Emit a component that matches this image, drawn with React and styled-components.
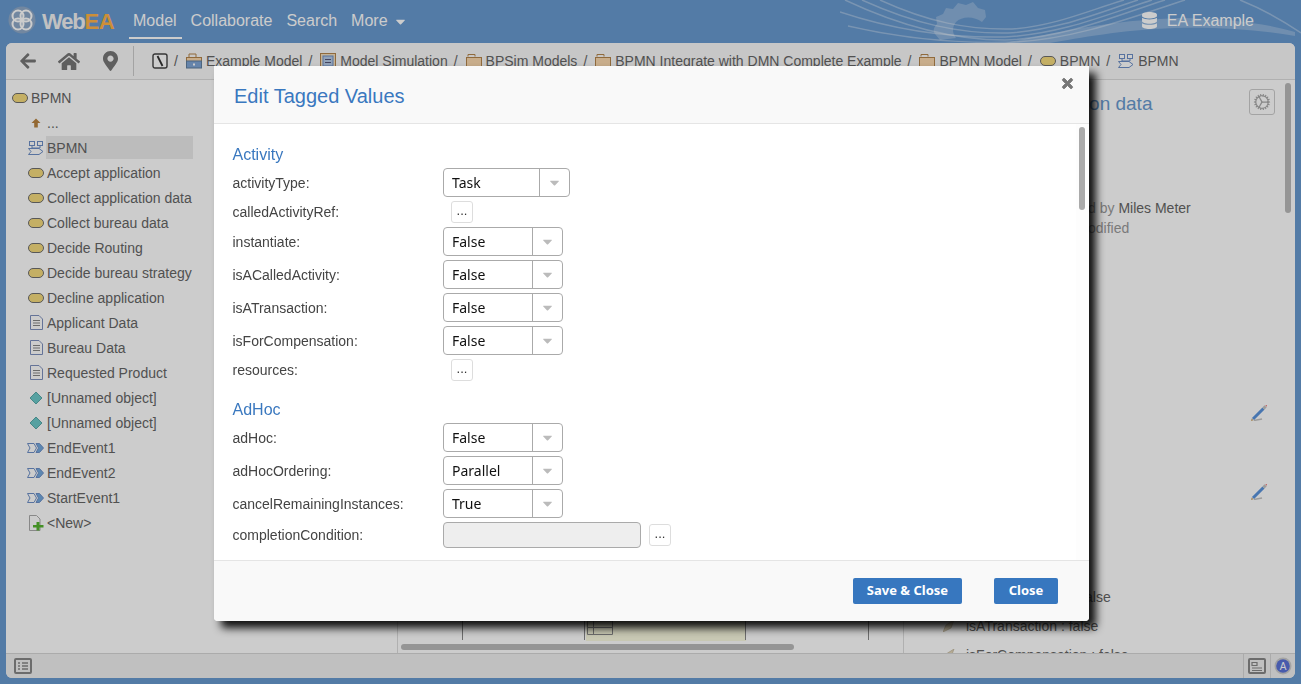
import React from 'react';
import styled, { createGlobalStyle } from 'styled-components';
import { FaArrowLeft, FaHome, FaMapMarkerAlt, FaDatabase, FaTimes, FaCaretDown } from 'react-icons/fa';
import { IoCogOutline } from 'react-icons/io5';

const GlobalStyle = createGlobalStyle`
  html, body {
    margin: 0;
    height: 100%;
    overflow: hidden;
    font-family: "Liberation Sans", Arial, sans-serif;
    font-size: 14px;
    color: #666;
  }
  #root {
    height: 100%;
  }
`;

const Page = styled.div`
  height: 100%;
  display: flex;
  flex-direction: column;
  background: #689ad0;
`;

const Header = styled.header`
  position: relative;
  height: 43px;
  flex: none;
  display: flex;
  align-items: flex-start;
  overflow: hidden;
`;

const Waves = styled.svg`
  position: absolute;
  left: 840px;
  top: 0;
`;

const Brand = styled.div`
  width: 129px;
  height: 39px;
  padding: 5px 0 0 8px;
  box-sizing: border-box;
  display: flex;
  align-items: center;
  font-size: 22px;
  font-weight: bold;
  letter-spacing: -1.2px;
  color: #f2f2f2;
  span {
    color: #ffb347;
    letter-spacing: -0.4px;
  }
  svg {
    margin: -5px 6px 0 0;
  }
`;

const NavItem = styled.a`
  height: 39px;
  box-sizing: border-box;
  padding: 5px 5px 0 ${props => (props.$first ? '4px' : '0')};
  margin-right: ${props => props.$gap}px;
  display: flex;
  align-items: center;
  font-size: 16px;
  color: #fff;
  border-bottom: 2px solid ${props => (props.$active ? '#fff' : 'transparent')};
  svg {
    margin-left: 5px;
  }
`;

const Repo = styled.div`
  margin-left: auto;
  height: 39px;
  padding: 2px 47px 0 0;
  box-sizing: border-box;
  position: relative;
  display: flex;
  align-items: center;
  gap: 9px;
  font-size: 16px;
  color: #fff;
`;

const Panel = styled.main`
  flex: 1;
  min-height: 0;
  margin: 0 6px 6px;
  display: flex;
  flex-direction: column;
  background: #fff;
  border-radius: 6px;
  overflow: hidden;
`;

const Toolbar = styled.div`
  height: 36px;
  flex: none;
  display: flex;
  align-items: center;
  background: #f9f9f9;
  border-bottom: 1px solid #dcdcdc;
  white-space: nowrap;
  overflow: hidden;
`;

const ToolIcon = styled.span`
  display: flex;
  width: ${props => props.$width}px;
  margin-left: ${props => props.$left}px;
  color: #777;
`;

const ToolDivider = styled.div`
  width: 1px;
  height: 30px;
  margin: 0 18px 0 15px;
  background: #ccc;
`;

const Crumb = styled.span`
  display: flex;
  align-items: center;
  gap: 4px;
  color: #666;
`;

const CrumbSep = styled.span`
  margin: 0 8px 0 6px;
  color: #666;
`;

const Workspace = styled.div`
  flex: 1;
  min-height: 0;
  display: flex;
`;

const Tree = styled.nav`
  width: 392px;
  flex: none;
  padding: 5px 0 0 6px;
  box-sizing: border-box;
  border-right: 1px solid #ddd;
`;

const TreeRow = styled.div`
  height: 25px;
  display: flex;
  align-items: center;
  gap: 2px;
  padding-left: ${props => (props.$root ? '0' : '16px')};
`;

const TreeIcon = styled.span`
  width: 16px;
  display: flex;
  justify-content: center;
  flex: none;
`;

const TreeLabel = styled.span`
  height: 23px;
  line-height: 25px;
  padding-left: 1px;
  width: ${props => (props.$selected ? '146px' : 'auto')};
  background: ${props => (props.$selected ? '#ececec' : 'transparent')};
`;

const Canvas = styled.section`
  width: 506px;
  flex: none;
  display: flex;
  flex-direction: column;
  justify-content: flex-end;
  box-sizing: border-box;
  border-right: 1px solid #ddd;
`;

const HScroll = styled.div`
  height: 6px;
  width: 393px;
  margin: 3px 0 3px 3px;
  border-radius: 3px;
  background: #bbb;
`;

const Details = styled.aside`
  position: relative;
  flex: 1;
  min-width: 0;
  overflow: hidden;
`;

const DetailsHead = styled.div`
  margin-top: 9px;
  height: 26px;
  padding: 0 20px 0 52px;
  display: flex;
  align-items: center;
  justify-content: space-between;
`;

const DetailsTitle = styled.h2`
  margin: 4px 0 0;
  font-size: 19px;
  font-weight: normal;
  color: #689ad0;
`;

const GearButton = styled.button`
  width: 26px;
  height: 26px;
  padding: 0;
  display: flex;
  align-items: center;
  justify-content: center;
  background: transparent;
  border: 1px solid #ccc;
  border-radius: 3px;
  color: #aaa;
`;

const Meta = styled.div`
  margin-top: 83px;
  padding-left: 142px;
  line-height: 20px;
  color: #999;
  b {
    font-weight: normal;
    color: #666;
  }
`;

const PencilRow = styled.div`
  margin-top: ${props => props.$top}px;
  padding-right: 28px;
  display: flex;
  justify-content: flex-end;
`;

const PropList = styled.div`
  margin-top: 82px;
`;

const PropRow = styled.div`
  height: 29px;
  display: flex;
  align-items: center;
  gap: 11px;
  padding-left: 39px;
`;

const VScroll = styled.div`
  position: absolute;
  top: 3px;
  right: 4px;
  width: 6px;
  height: 130px;
  border-radius: 3px;
  background: #bbb;
`;

const StatusBar = styled.footer`
  height: 24px;
  flex: none;
  display: flex;
  align-items: center;
  background: #f0f0f0;
  border-top: 1px solid #d6d6d6;
`;

const StatusCell = styled.div`
  height: 100%;
  display: flex;
  align-items: center;
  padding: 0 ${props => props.$pad}px;
  border-left: 1px solid ${props => (props.$line ? '#d6d6d6' : 'transparent')};
  margin-left: ${props => (props.$push ? 'auto' : '0')};
`;

const Backdrop = styled.div`
  position: fixed;
  inset: 0;
  background: rgba(0, 0, 0, 0.2);
`;

const Modal = styled.div`
  position: absolute;
  left: 214px;
  top: 66px;
  width: 875px;
  height: 555px;
  display: flex;
  flex-direction: column;
  background: #fff;
  border-radius: 0 0 4px 4px;
  box-shadow: 7px 7px 8px rgba(0, 0, 0, 0.92);
`;

const ModalHeader = styled.div`
  height: 58px;
  flex: none;
  display: flex;
  align-items: center;
  justify-content: space-between;
  padding: 3px 14px 0 20px;
  box-sizing: border-box;
  background: #f9f9f9;
  border-bottom: 1px solid #e5e5e5;
`;

const ModalTitle = styled.h1`
  margin: 0;
  font-size: 20px;
  font-weight: normal;
  color: #3a78bf;
`;

const CloseIcon = styled.span`
  display: flex;
  margin-bottom: 26px;
  color: #777;
  svg {
    stroke: #777;
    stroke-width: 30px;
  }
`;

const ModalBody = styled.div`
  position: relative;
  flex: 1;
  min-height: 0;
  padding: 21px 0 0 18.5px;
  overflow: hidden;
`;

const ScrollTrack = styled.div`
  position: absolute;
  top: 0;
  right: 0;
  bottom: 0;
  width: 13px;
  background: #fdfdfd;
`;

const ScrollThumb = styled.div`
  margin: 3px 0 0 3px;
  width: 6px;
  height: 83px;
  border-radius: 3px;
  background: #aaa;
`;

const SectionTitle = styled.h3`
  margin: ${props => (props.$first ? '0' : '19px')} 0 3px;
  font-size: 16px;
  line-height: 20px;
  font-weight: normal;
  color: #3a78bf;
`;

const FieldRow = styled.div`
  display: flex;
  align-items: center;
  margin-bottom: 4px;
  min-height: 22px;
`;

const FieldLabel = styled.label`
  width: 210.5px;
  flex: none;
  color: #444;
`;

const Combo = styled.div`
  width: ${props => props.$width}px;
  height: 29px;
  box-sizing: border-box;
  display: flex;
  border: 1px solid #aaa;
  border-radius: 4px;
  font-family: "Noto Sans", sans-serif;
  font-size: 14px;
  color: #111;
  background: #fff;
`;

const ComboValue = styled.span`
  flex: 1;
  padding-left: 8px;
  line-height: 27px;
`;

const ComboArrow = styled.span`
  width: 29px;
  display: flex;
  align-items: center;
  justify-content: center;
  border-left: 1px solid #aaa;
  color: #bbb;
`;

const DotsButton = styled.button`
  width: 22px;
  height: 22px;
  padding: 0 0 4px;
  margin-left: 8px;
  background: #fff;
  border: 1px solid #ddd;
  border-radius: 3px;
  font-family: "Liberation Sans", sans-serif;
  font-size: 13px;
  color: #333;
`;

const ReadonlyInput = styled.div`
  width: 198px;
  height: 26px;
  box-sizing: border-box;
  background: #eee;
  border: 1px solid #aaa;
  border-radius: 4px;
`;

const ModalFooter = styled.div`
  height: 61px;
  flex: none;
  box-sizing: border-box;
  display: flex;
  align-items: center;
  justify-content: flex-end;
  gap: 32px;
  padding: 0 31px 0 0;
  background: #f9f9f9;
  border-top: 1px solid #e5e5e5;
  border-radius: 0 0 4px 4px;
`;

const PrimaryButton = styled.button`
  height: 26px;
  padding: 0 0 2px;
  width: ${props => props.$width}px;
  background: #3777bf;
  border: none;
  border-radius: 2px;
  font-family: "Noto Sans", sans-serif;
  font-size: 13px;
  font-weight: bold;
  color: #fff;
`;

const Logo = () => (
  <svg width="28" height="28" viewBox="0 0 28 28">
    <circle cx="14" cy="14" r="13.5" fill="#8fa9c8" />
    <g fill="none" stroke="#fff" strokeWidth="2">
      <circle cx="10" cy="10" r="5.5" />
      <circle cx="18" cy="18" r="5.5" />
      <circle cx="18" cy="10" r="5.5" />
      <circle cx="10" cy="18" r="5.5" />
    </g>
  </svg>
);

const Pill = () => (
  <svg width="16" height="10" viewBox="0 0 16 10">
    <rect x="0.5" y="0.5" width="15" height="9" rx="4.5" fill="#f6db7e" stroke="#6e6e6e" />
  </svg>
);

const UpArrow = () => (
  <svg width="10" height="10" viewBox="0 0 10 10">
    <path d="M5 0.5 L9.5 5 H6.8 V9.5 H3.2 V5 H0.5 Z" fill="#b8833f" />
  </svg>
);

const DiagramIcon = () => (
  <svg width="16" height="14" viewBox="0 0 16 14" fill="#fff" stroke="#6d8fc7">
    <rect x="1.5" y="0.5" width="5" height="4" />
    <rect x="9.5" y="0.5" width="5" height="4" />
    <path d="M4 4.5 V7 H12 V4.5" fill="none" />
    <path d="M0.5 7.5 H11 L15 10.5 L11 13.5 H0.5 L3 10.5 Z" />
  </svg>
);

const DocIcon = () => (
  <svg width="13" height="15" viewBox="0 0 13 15" fill="#fff" stroke="#7e90be">
    <path d="M0.5 0.5 H9 L12.5 4 V14.5 H0.5 Z" />
    <path d="M3 5.5 H10 M3 8 H10 M3 10.5 H10" stroke="#888" />
  </svg>
);

const Diamond = () => (
  <svg width="14" height="14" viewBox="0 0 14 14">
    <path d="M7 1 L13 7 L7 13 L1 7 Z" fill="#6ccaca" stroke="#5aa9a9" />
  </svg>
);

const EventIcon = () => (
  <svg width="17" height="10" viewBox="0 0 17 10" style={{ marginLeft: -1 }}>
    <path d="M0.5 0.5 H7 L9.5 5 L7 9.5 H0.5 L3 5 Z" fill="#fff" stroke="#6d8fc7" />
    <path d="M9 0.5 H12.5 L16.5 5 L12.5 9.5 H9 L11.5 5 Z" fill="#74a9de" stroke="#6d8fc7" />
  </svg>
);

const NewDocIcon = () => (
  <svg width="15" height="16" viewBox="0 0 15 16" style={{ marginLeft: 1 }}>
    <path d="M0.5 0.5 H7.5 L11 4 V15.5 H0.5 Z" fill="#fff" stroke="#aaa" />
    <path d="M7.5 7 H10.5 V10 H14.5 V12.5 H10.5 V15.5 H7.5 V12.5 H4 V10 H7.5 Z" fill="#55b52f" />
  </svg>
);

const FolderIcon = () => (
  <svg width="16" height="16" viewBox="0 0 16 16">
    <path d="M2 3.5 V1.5 H9 V3.5" fill="none" stroke="#b5854b" />
    <rect x="0.5" y="4.5" width="15" height="10" fill="#fad9ae" stroke="#b5854b" />
  </svg>
);

const PackageIcon = () => (
  <svg width="16" height="16" viewBox="0 0 16 16">
    <path d="M3 4 V1 H10 V4" fill="none" stroke="#b5854b" />
    <rect x="0.5" y="4.5" width="15" height="4" fill="#fad9ae" stroke="#b5854b" />
    <rect x="0.5" y="8" width="15" height="7" fill="#7fa6d6" stroke="#5f7f9f" />
    <rect x="7" y="10.5" width="2" height="2" fill="#fff" />
  </svg>
);

const SimIcon = () => (
  <svg width="16" height="16" viewBox="0 0 16 16">
    <rect x="0.5" y="0.5" width="15" height="15" fill="#f4e0c0" stroke="#b5854b" />
    <rect x="3" y="3" width="10" height="10" fill="#b6cbe6" stroke="#6d8fc7" />
    <path d="M5 6.5 H11 M5 9.5 H11" stroke="#557" />
  </svg>
);

const RootIcon = () => (
  <svg width="16" height="16" viewBox="0 0 16 16">
    <rect x="1" y="1" width="14" height="14" rx="2" fill="#fff" stroke="#444" strokeWidth="1.4" />
    <path d="M5.5 3 L10.5 13" stroke="#333" strokeWidth="1.8" />
  </svg>
);

const Pencil = () => (
  <svg width="16" height="16" viewBox="0 0 16 16">
    <path d="M3 15.5 L11 14" stroke="#999" strokeWidth="1.4" fill="none" opacity="0.6" />
    <path d="M2 14 L12.5 3.5" stroke="#5b94dc" strokeWidth="3" />
    <path d="M12.5 3.5 L14.6 1.4" stroke="#c4c4c4" strokeWidth="3" />
    <path d="M15 0 L16 1" stroke="#e88" strokeWidth="2" />
    <path d="M0 16 L2.6 15.3 L0.7 13.4 Z" fill="#caa468" />
  </svg>
);

const ListIcon = () => (
  <svg width="18" height="16" viewBox="0 0 18 16" fill="none" stroke="#888">
    <rect x="1" y="1" width="16" height="14" rx="1" strokeWidth="2" />
    <path d="M4 5 H6 M8 5 H14 M4 8 H6 M8 8 H14 M4 11 H6 M8 11 H14" strokeWidth="1.6" />
  </svg>
);

const PreviewIcon = () => (
  <svg width="18" height="16" viewBox="0 0 18 16" fill="none" stroke="#888">
    <rect x="1" y="1" width="16" height="14" rx="1" strokeWidth="2" />
    <path d="M4 4.5 H9 V7.5 H4 Z M4 10 H14 M4 12.5 H14" strokeWidth="1.2" />
  </svg>
);

const AvatarIcon = () => (
  <svg width="18" height="18" viewBox="0 0 18 18">
    <circle cx="9" cy="9" r="8.5" fill="#ccc" />
    <circle cx="9" cy="9" r="6.8" fill="#5a72d8" />
    <text x="9" y="12.5" textAnchor="middle" fontSize="10" fontFamily="Liberation Sans" fill="#fff">A</text>
  </svg>
);

const TagIcon = () => (
  <svg width="12" height="12" viewBox="0 0 12 12">
    <path d="M0 12 L3 5 L11 0 L8 8 Z" fill="#e2d6ba" stroke="#b8ad8e" strokeWidth="0.6" />
  </svg>
);

const waveLines = [
  'M5 0 C60 26 115 40 165 40 C225 38 275 16 325 0',
  'M0 12 C60 32 115 38 165 37 C222 34 268 14 312 0',
  'M22 0 C75 24 120 34 168 33 C220 30 260 12 298 0',
  'M40 0 C88 22 128 30 172 29 C215 26 250 10 284 0',
  'M8 26 C60 38 120 44 175 42 C235 39 290 18 345 0',
  'M400 0 C425 10 445 22 461 33'
];

const HeaderWaves = () => (
  <Waves width="461" height="43" viewBox="0 0 461 43">
    <g fill="#fff" fillOpacity="0.24">
      <path
        fillRule="evenodd"
        d="M95 34 C92 30 95 26 97 24 L96 17 L103 14 L106 8 L113 9 L118 3 L126 5 L133 2 L138 8 L145 10 L146 17 L142 22 C134 16 122 16 116 22 C112 27 112 33 116 38 L100 40 Z"
      />
      <path d="M165 43 C235 28 280 20 340 18 C385 18 430 24 455 32 L455 36 C420 30 380 27 335 28 C280 30 240 38 210 43 Z" />
    </g>
    <g fill="none" stroke="#fff" strokeOpacity="0.32" strokeWidth="1.5">
      {waveLines.map((d, i) => (
        <path key={i} d={d} />
      ))}
    </g>
  </Waves>
);

const CanvasDrawing = () => (
  <svg width="505" height="32" viewBox="0 0 505 32">
    <rect x="188" y="0" width="160" height="32" fill="#fbfbe0" />
    <path d="M64.5 0 V31 M186.5 0 V31 M347.5 0 V31 M470.5 0 V31" stroke="#888" />
    <path d="M189.5 0 V25.5 H214.5 V12 M189.5 18.5 H214.5 M195.5 12 V25.5 M189.5 12 H214.5" fill="none" stroke="#888" />
  </svg>
);

const crumbs = [
  { icon: <PackageIcon />, name: 'Example Model' },
  { icon: <SimIcon />, name: 'Model Simulation' },
  { icon: <FolderIcon />, name: 'BPSim Models' },
  { icon: <FolderIcon />, name: 'BPMN Integrate with DMN Complete Example' },
  { icon: <FolderIcon />, name: 'BPMN Model' },
  { icon: <Pill />, name: 'BPMN' },
  { icon: <DiagramIcon />, name: 'BPMN' }
];

const treeItems = [
  { icon: <UpArrow />, name: '...' },
  { icon: <DiagramIcon />, name: 'BPMN', selected: true },
  { icon: <Pill />, name: 'Accept application' },
  { icon: <Pill />, name: 'Collect application data' },
  { icon: <Pill />, name: 'Collect bureau data' },
  { icon: <Pill />, name: 'Decide Routing' },
  { icon: <Pill />, name: 'Decide bureau strategy' },
  { icon: <Pill />, name: 'Decline application' },
  { icon: <DocIcon />, name: 'Applicant Data' },
  { icon: <DocIcon />, name: 'Bureau Data' },
  { icon: <DocIcon />, name: 'Requested Product' },
  { icon: <Diamond />, name: '[Unnamed object]' },
  { icon: <Diamond />, name: '[Unnamed object]' },
  { icon: <EventIcon />, name: 'EndEvent1' },
  { icon: <EventIcon />, name: 'EndEvent2' },
  { icon: <EventIcon />, name: 'StartEvent1' },
  { icon: <NewDocIcon />, name: '<New>' }
];

const ComboField = ({ label, value, width = 120 }) => (
  <FieldRow>
    <FieldLabel>{label}</FieldLabel>
    <Combo $width={width}>
      <ComboValue>{value}</ComboValue>
      <ComboArrow>
        <FaCaretDown size={15} />
      </ComboArrow>
    </Combo>
  </FieldRow>
);

const DotsField = ({ label }) => (
  <FieldRow>
    <FieldLabel>{label}</FieldLabel>
    <DotsButton>...</DotsButton>
  </FieldRow>
);

export default function App() {
  return (
    <Page>
      <GlobalStyle />
      <Header>
        <HeaderWaves />
        <Brand>
          <Logo />
          Web<span>EA</span>
        </Brand>
        <NavItem $active $first $gap={9}>Model</NavItem>
        <NavItem $gap={9}>Collaborate</NavItem>
        <NavItem $gap={9}>Search</NavItem>
        <NavItem $gap={0}>
          More
          <FaCaretDown size={15} />
        </NavItem>
        <Repo>
          <FaDatabase size={17} />
          EA Example
        </Repo>
      </Header>

      <Panel>
        <Toolbar>
          <ToolIcon $left={13} $width={18}><FaArrowLeft size={18} /></ToolIcon>
          <ToolIcon $left={21} $width={22}><FaHome size={23} /></ToolIcon>
          <ToolIcon $left={23} $width={15}><FaMapMarkerAlt size={20} /></ToolIcon>
          <ToolDivider />
          <Crumb><RootIcon /></Crumb>
          <CrumbSep>/</CrumbSep>
          {crumbs.map((crumb, i) => (
            <React.Fragment key={i}>
              <Crumb>
                {crumb.icon}
                {crumb.name}
              </Crumb>
              {i < crumbs.length - 1 && <CrumbSep>/</CrumbSep>}
            </React.Fragment>
          ))}
        </Toolbar>

        <Workspace>
          <Tree>
            <TreeRow $root>
              <TreeIcon><Pill /></TreeIcon>
              <TreeLabel>BPMN</TreeLabel>
            </TreeRow>
            {treeItems.map((item, i) => (
              <TreeRow key={i}>
                <TreeIcon>{item.icon}</TreeIcon>
                <TreeLabel $selected={item.selected}>{item.name}</TreeLabel>
              </TreeRow>
            ))}
          </Tree>

          <Canvas>
            <CanvasDrawing />
            <HScroll />
          </Canvas>

          <Details>
            <DetailsHead>
              <DetailsTitle>Collect application data</DetailsTitle>
              <GearButton><IoCogOutline size={20} /></GearButton>
            </DetailsHead>
            <Meta>
              <div>Created by <b>Miles Meter</b></div>
              <div>Last modified</div>
            </Meta>
            <PencilRow $top={167}><Pencil /></PencilRow>
            <PencilRow $top={63}><Pencil /></PencilRow>
            <PropList>
              <PropRow><TagIcon />isACalledActivity : false</PropRow>
              <PropRow><TagIcon />isATransaction : false</PropRow>
              <PropRow><TagIcon />isForCompensation : false</PropRow>
            </PropList>
            <VScroll />
          </Details>
        </Workspace>

        <StatusBar>
          <StatusCell $pad={7}><ListIcon /></StatusCell>
          <StatusCell $push $line $pad={4}><PreviewIcon /></StatusCell>
          <StatusCell $line $pad={3}><AvatarIcon /></StatusCell>
        </StatusBar>
      </Panel>

      <Backdrop />

      <Modal>
        <ModalHeader>
          <ModalTitle>Edit Tagged Values</ModalTitle>
          <CloseIcon><FaTimes size={15} /></CloseIcon>
        </ModalHeader>
        <ModalBody>
          <SectionTitle $first>Activity</SectionTitle>
          <ComboField label="activityType:" value="Task" width={127} />
          <DotsField label="calledActivityRef:" />
          <ComboField label="instantiate:" value="False" />
          <ComboField label="isACalledActivity:" value="False" />
          <ComboField label="isATransaction:" value="False" />
          <ComboField label="isForCompensation:" value="False" />
          <DotsField label="resources:" />
          <SectionTitle>AdHoc</SectionTitle>
          <ComboField label="adHoc:" value="False" />
          <ComboField label="adHocOrdering:" value="Parallel" />
          <ComboField label="cancelRemainingInstances:" value="True" />
          <FieldRow>
            <FieldLabel>completionCondition:</FieldLabel>
            <ReadonlyInput />
            <DotsButton>...</DotsButton>
          </FieldRow>
          <ScrollTrack><ScrollThumb /></ScrollTrack>
        </ModalBody>
        <ModalFooter>
          <PrimaryButton $width={109}>Save &amp; Close</PrimaryButton>
          <PrimaryButton $width={64}>Close</PrimaryButton>
        </ModalFooter>
      </Modal>
    </Page>
  );
}
